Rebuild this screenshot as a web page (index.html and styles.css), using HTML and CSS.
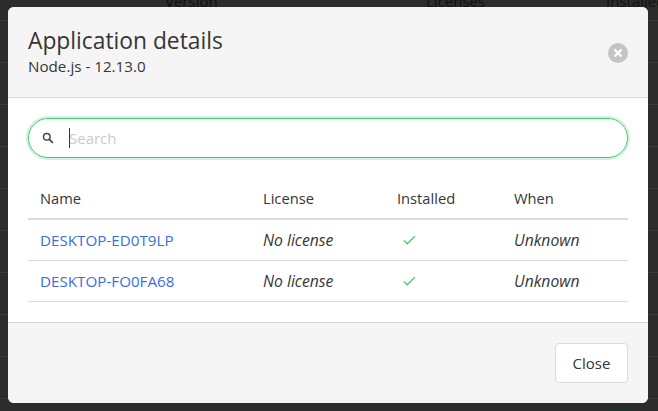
FILE: index.html
```html
<!DOCTYPE html>
<html lang="en">
<head>
    <meta charset="UTF-8">
    <meta name="viewport" content="width=device-width, initial-scale=1.0">
    <title>Application details</title>
    <link rel="stylesheet" href="styles.css">
</head>
<body>
    <div class="backdrop">
        <div class="backdrop-head">
            <span class="backdrop-version">Version</span>
            <span class="backdrop-licenses">Licenses</span>
            <span class="backdrop-installed">Installed</span>
        </div>
        <div class="backdrop-row"></div>
        <div class="backdrop-row"></div>
        <div class="backdrop-row"></div>
        <div class="backdrop-row"></div>
        <div class="backdrop-row"></div>
        <div class="backdrop-row"></div>
        <div class="backdrop-row"></div>
        <div class="backdrop-row"></div>
        <div class="backdrop-row"></div>
    </div>
    <div class="backdrop-pill"></div>

    <div class="modal">
        <header class="modal-head">
            <div>
                <h1>Application details</h1>
                <p class="subtitle">Node.js - 12.13.0</p>
            </div>
            <button class="close-x" aria-label="Close">
                <svg width="10" height="10" viewBox="0 0 10 10">
                    <path d="M1.5 1.5l7 7M8.5 1.5l-7 7" stroke="#fff" stroke-width="2.4" fill="none"/>
                </svg>
            </button>
        </header>
        <section class="modal-body">
            <div class="search">
                <svg class="search-icon" width="12" height="12" viewBox="0 0 12 12">
                    <circle cx="4.8" cy="4.8" r="3.3" stroke="#4a4a4a" stroke-width="1.5" fill="none"/>
                    <path d="M7.3 7.3l3.6 3.6" stroke="#4a4a4a" stroke-width="1.8" fill="none"/>
                </svg>
                <span class="caret"></span>
                <input type="text" placeholder="Search">
            </div>
            <table>
                <thead>
                    <tr>
                        <th class="col-name">Name</th>
                        <th class="col-license">License</th>
                        <th class="col-installed">Installed</th>
                        <th>When</th>
                    </tr>
                </thead>
                <tbody>
                    <tr>
                        <td><a href="#">DESKTOP-ED0T9LP</a></td>
                        <td><em>No license</em></td>
                        <td class="check">
                            <svg width="13" height="10" viewBox="0 0 13 10">
                                <path d="M0.8 5.4l3.4 3.4 7.6-7.6" stroke="#48c774" stroke-width="1.3" fill="none"/>
                            </svg>
                        </td>
                        <td><em>Unknown</em></td>
                    </tr>
                    <tr>
                        <td><a href="#">DESKTOP-FO0FA68</a></td>
                        <td><em>No license</em></td>
                        <td class="check">
                            <svg width="13" height="10" viewBox="0 0 13 10">
                                <path d="M0.8 5.4l3.4 3.4 7.6-7.6" stroke="#48c774" stroke-width="1.3" fill="none"/>
                            </svg>
                        </td>
                        <td><em>Unknown</em></td>
                    </tr>
                </tbody>
            </table>
        </section>
        <footer class="modal-foot">
            <button class="btn">Close</button>
        </footer>
    </div>
</body>
</html>
```

FILE: styles.css
```css
* {
    box-sizing: border-box;
}
html, body {
    height: 100%;
}
body {
    margin: 0;
    height: 411px;
    overflow: hidden;
    position: relative;
    background-color: #2c2c2c;
    font-family: "Open Sans", "Noto Sans", sans-serif;
    font-size: 15px;
    color: #363636;
}
.backdrop {
    position: absolute;
    top: 0;
    left: 0;
    right: 0;
}
.backdrop-head {
    height: 21px;
    border-bottom: 1px solid #3a3a3a;
    position: relative;
    font-size: 15px;
    color: #111;
}
.backdrop-head span {
    position: absolute;
    top: -9px;
}
.backdrop-version {
    left: 165px;
}
.backdrop-licenses {
    left: 426px;
}
.backdrop-installed {
    left: 606px;
}
.backdrop-row {
    height: 42px;
    border-bottom: 1px solid #3a3a3a;
}
.backdrop-pill {
    position: absolute;
    left: 607px;
    top: 409px;
    width: 22px;
    height: 12px;
    border-radius: 4px;
    background: #0f3a30;
}
.modal {
    position: absolute;
    top: 7px;
    left: 8px;
    width: 640px;
    height: 396px;
    border-radius: 6px;
    overflow: hidden;
    display: flex;
    flex-direction: column;
    background: #fff;
}
.modal-head {
    height: 91px;
    background: #f5f5f5;
    border-bottom: 1px solid #dbdbdb;
    padding: 19px 20px 0;
    display: flex;
    justify-content: space-between;
}
h1 {
    margin: 0;
    font-size: 22.8px;
    font-weight: 400;
    line-height: 30px;
}
.subtitle {
    margin: 0;
    font-size: 15.2px;
    line-height: 20px;
}
.close-x {
    width: 20px;
    height: 20px;
    margin-top: 17px;
    padding: 0;
    border: none;
    border-radius: 50%;
    background: #c4c4c4;
    display: flex;
    align-items: center;
    justify-content: center;
}
.modal-body {
    flex: 1;
    padding: 20px;
}
.search {
    height: 40px;
    border: 1px solid #48c774;
    border-radius: 20px;
    box-shadow: 0 0 0 2px rgba(72, 199, 116, 0.25);
    display: flex;
    align-items: center;
    padding-left: 13px;
    position: relative;
}
.search-icon {
    flex: none;
}
.caret {
    position: absolute;
    left: 40px;
    top: 9px;
    width: 1px;
    height: 20px;
    background: #363636;
}
.search input {
    flex: 1;
    border: none;
    outline: none;
    background: none;
    margin-left: 15px;
    padding: 0;
    font-family: inherit;
    font-size: 15px;
    color: #363636;
}
.search input::placeholder {
    color: #cfc9cf;
}
table {
    width: 100%;
    margin-top: 20px;
    border-collapse: collapse;
    table-layout: fixed;
}
th {
    font-weight: 400;
    font-size: 14.7px;
    text-align: left;
    height: 41px;
    padding: 0 12px;
    border-bottom: 2px solid #dbdbdb;
}
.col-name {
    width: 223px;
}
.col-license {
    width: 134px;
}
.col-installed {
    width: 117px;
}
td {
    height: 41px;
    padding: 0 12px;
    border-bottom: 1px solid #dbdbdb;
}
td a {
    color: #3b6fd8;
    font-size: 15.2px;
    text-decoration: none;
}
td em {
    font-size: 15.7px;
}
.check svg {
    display: block;
    margin-left: 6px;
}
.modal-foot {
    height: 81px;
    background: #f5f5f5;
    border-top: 1px solid #dbdbdb;
    padding: 20px;
    display: flex;
    justify-content: flex-end;
}
.btn {
    width: 73px;
    height: 40px;
    background: #fff;
    border: 1px solid #dbdbdb;
    border-radius: 4px;
    font-family: inherit;
    font-size: 15px;
    color: #363636;
}
```
